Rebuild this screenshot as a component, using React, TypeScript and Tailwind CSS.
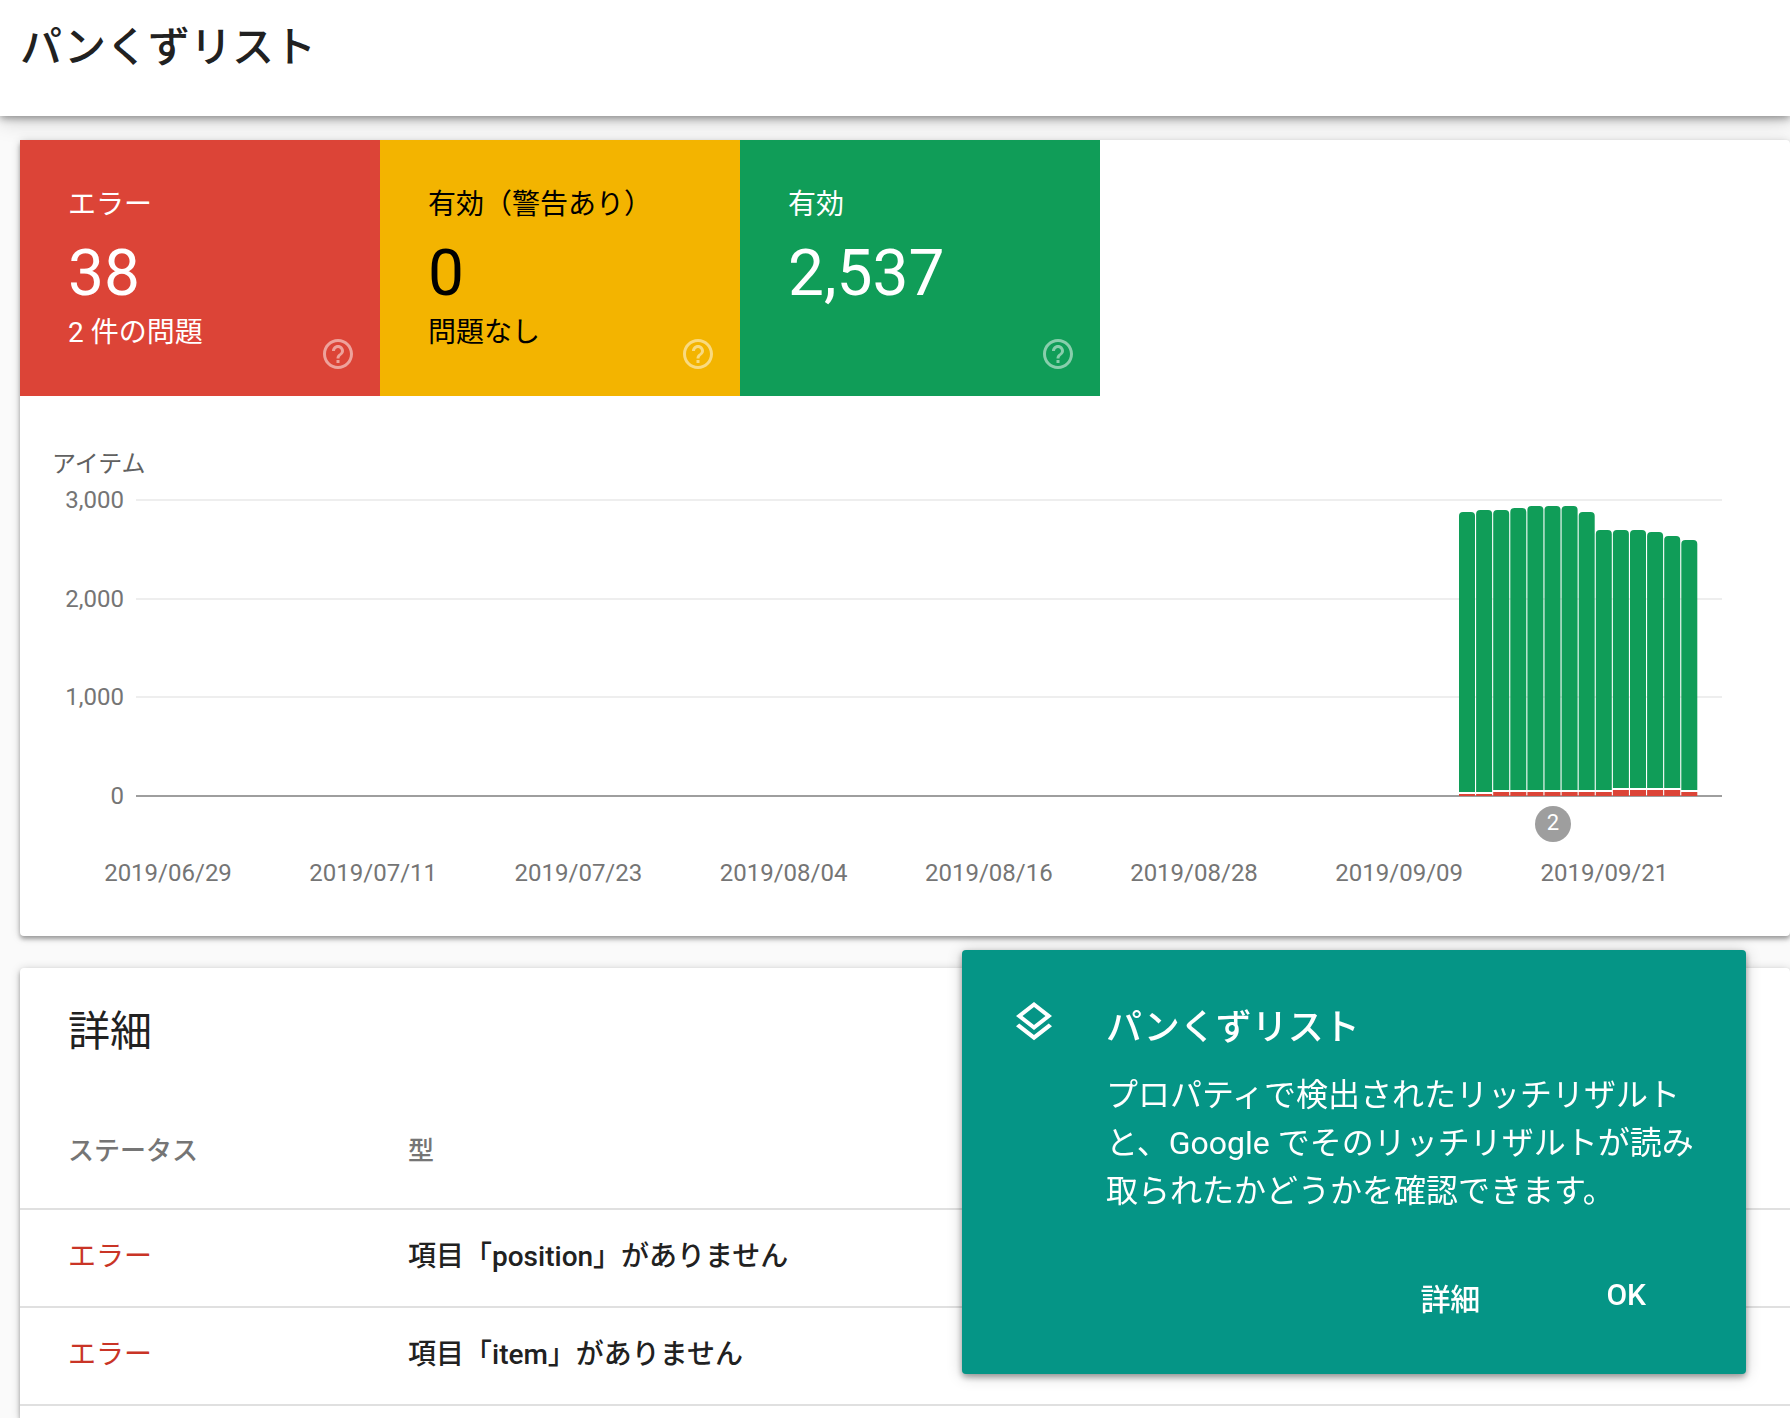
import { MdHelpOutline, MdOutlineLayers } from "react-icons/md";

const tiles = [
  {
    label: "エラー",
    count: "38",
    note: "2 件の問題",
    color: "bg-[#dc4437] text-white",
  },
  {
    label: "有効（警告あり）",
    count: "0",
    note: "問題なし",
    color: "bg-[#f3b400] text-black",
  },
  {
    label: "有効",
    count: "2,537",
    note: "",
    color: "bg-[#109d58] text-white",
  },
];

const issues = [
  { status: "エラー", type: "項目「position」がありません" },
  { status: "エラー", type: "項目「item」がありません" },
];

const yTicks = [
  { label: "3,000", y: 84 },
  { label: "2,000", y: 183 },
  { label: "1,000", y: 281 },
];

const dates = [
  "2019/06/29",
  "2019/07/11",
  "2019/07/23",
  "2019/08/04",
  "2019/08/16",
  "2019/08/28",
  "2019/09/09",
  "2019/09/21",
];

// axis line sits at y = 380, values are chart units above it
const bars = [
  { total: 284, error: 2 },
  { total: 286, error: 2 },
  { total: 286, error: 4 },
  { total: 288, error: 4 },
  { total: 290, error: 4 },
  { total: 290, error: 4 },
  { total: 290, error: 4 },
  { total: 284, error: 4 },
  { total: 266, error: 4 },
  { total: 266, error: 6 },
  { total: 266, error: 6 },
  { total: 264, error: 6 },
  { total: 260, error: 6 },
  { total: 256, error: 4 },
];

const BAR_STEP = 17.1;

function Chart() {
  return (
    <svg
      viewBox="0 0 1770 500"
      className="block h-auto w-full"
      role="img"
      aria-label="アイテム"
    >
      <text x="32" y="56" fontSize="24" fill="#616161">
        アイテム
      </text>

      {yTicks.map((tick) => (
        <g key={tick.label}>
          <rect x="116" y={tick.y - 1} width="1586" height="2" fill="#eeeeee" />
          <text x="104" y={tick.y + 8} fontSize="24" fill="#757575" textAnchor="end">
            {tick.label}
          </text>
        </g>
      ))}

      <rect x="116" y="379" width="1586" height="2" fill="#9e9e9e" />
      <text x="104" y="388" fontSize="24" fill="#757575" textAnchor="end">
        0
      </text>

      {bars.map((bar, i) => {
        const x = 1439 + i * BAR_STEP;
        const top = 380 - bar.total;
        const bottom = 378 - bar.error;

        return (
          <g key={i}>
            <path
              d={`M${x} ${bottom}V${top + 4}q0 -4 4 -4h8q4 0 4 4V${bottom}z`}
              fill="#109d58"
            />
            <rect x={x} y={bottom} width="16" height="2" fill="#ffffff" />
            <rect x={x} y={380 - bar.error} width="16" height={bar.error} fill="#dc4437" />
          </g>
        );
      })}

      <circle cx="1533" cy="408" r="18" fill="#9e9e9e" />
      <text x="1533" y="414" fontSize="22" fill="#ffffff" textAnchor="middle">
        2
      </text>

      {dates.map((date, i) => (
        <text
          key={date}
          x={148 + i * BAR_STEP * 12}
          y="465"
          fontSize="24"
          fill="#757575"
          textAnchor="middle"
        >
          {date}
        </text>
      ))}
    </svg>
  );
}

export default function App() {
  return (
    <div
      lang="ja"
      className="flex min-h-screen flex-col bg-[#fafafa] font-[Roboto,'Noto_Sans_CJK_JP',sans-serif] text-[#212121]"
    >
      {/* Header */}
      <header className="h-[116px] bg-white px-5 pt-[18px] shadow-[0_2px_8px_rgba(0,0,0,0.4),0_6px_20px_rgba(0,0,0,0.15)]">
        <h1 className="text-[42px] leading-[60px] font-medium">パンくずリスト</h1>
      </header>

      <main className="flex flex-1 flex-col gap-8 pt-6 pl-5">
        {/* Summary */}
        <section className="rounded-sm bg-white shadow-[0_3px_4px_rgba(0,0,0,0.3),0_1px_10px_rgba(0,0,0,0.18)]">
          <div className="flex">
            {tiles.map((tile) => (
              <div
                key={tile.label}
                className={`relative h-64 w-[360px] px-12 pt-[45px] ${tile.color}`}
              >
                <h2 className="text-[28px] leading-10">{tile.label}</h2>
                <p className="mt-[10px] text-[64px] leading-[78px]">{tile.count}</p>
                <p className="text-[28px] leading-10">{tile.note}</p>
                <button
                  type="button"
                  aria-label="ヘルプ"
                  className="absolute right-6 bottom-6 text-white/50"
                >
                  <MdHelpOutline className="size-9" />
                </button>
              </div>
            ))}
          </div>

          <div className="pt-5 pb-5">
            <Chart />
          </div>
        </section>

        {/* Details */}
        <section className="flex-1 rounded-t-sm bg-white shadow-[0_3px_4px_rgba(0,0,0,0.3),0_1px_10px_rgba(0,0,0,0.18)]">
          <h2 className="px-12 pt-[34px] text-[42px] leading-[60px]">詳細</h2>

          <table className="mt-8 w-full table-fixed text-left text-[28px] leading-10">
            <thead>
              <tr className="h-[115px] border-b-2 border-[#e0e0e0] text-[26px] text-[#757575]">
                <th className="w-[388px] pl-12 font-medium">ステータス</th>
                <th className="font-medium">型</th>
              </tr>
            </thead>
            <tbody>
              {issues.map((issue) => (
                <tr key={issue.type} className="h-[98px] border-b-2 border-[#e0e0e0]">
                  <td className="pb-[2px] pl-12 text-[#c93426]">{issue.status}</td>
                  <td className="pb-[2px] font-medium">{issue.type}</td>
                </tr>
              ))}
            </tbody>
          </table>
        </section>
      </main>

      {/* Feature tip */}
      <aside className="fixed right-11 bottom-11 flex h-[424px] w-[784px] rounded-sm bg-[#059586] pt-12 pr-12 pl-12 text-white shadow-[0_3px_6px_rgba(0,0,0,0.35),0_2px_16px_rgba(0,0,0,0.2)]">
        <MdOutlineLayers className="size-12 shrink-0" />
        <div className="ml-12 flex-1">
          <h2 className="text-[36px] leading-[60px] font-medium">パンくずリスト</h2>
          <p className="mt-[13px] w-[596px] text-[32px] leading-12">
            プロパティで検出されたリッチリザルトと、Google でそのリッチリザルトが読み取られたかどうかを確認できます。
          </p>
          <div className="mt-14 flex items-start justify-end gap-[126px] pr-14 text-[30px] font-medium">
            <button type="button" className="leading-[58px]">
              詳細
            </button>
            <button type="button" className="leading-12">
              OK
            </button>
          </div>
        </div>
      </aside>
    </div>
  );
}
